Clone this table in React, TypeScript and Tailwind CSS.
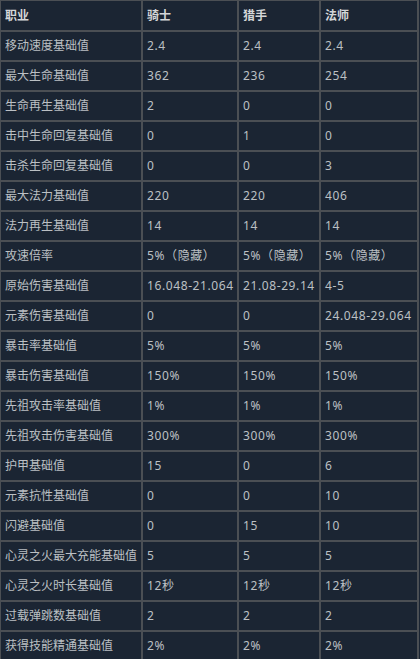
const HEAD = ["职业", "骑士", "猎手", "法师"];

const ROWS: string[][] = [
  ["移动速度基础值", "2.4", "2.4", "2.4"],
  ["最大生命基础值", "362", "236", "254"],
  ["生命再生基础值", "2", "0", "0"],
  ["击中生命回复基础值", "0", "1", "0"],
  ["击杀生命回复基础值", "0", "0", "3"],
  ["最大法力基础值", "220", "220", "406"],
  ["法力再生基础值", "14", "14", "14"],
  ["攻速倍率", "5%（隐藏）", "5%（隐藏）", "5%（隐藏）"],
  ["原始伤害基础值", "16.048-21.064", "21.08-29.14", "4-5"],
  ["元素伤害基础值", "0", "0", "24.048-29.064"],
  ["暴击率基础值", "5%", "5%", "5%"],
  ["暴击伤害基础值", "150%", "150%", "150%"],
  ["先祖攻击率基础值", "1%", "1%", "1%"],
  ["先祖攻击伤害基础值", "300%", "300%", "300%"],
  ["护甲基础值", "15", "0", "6"],
  ["元素抗性基础值", "0", "0", "10"],
  ["闪避基础值", "0", "15", "10"],
  ["心灵之火最大充能基础值", "5", "5", "5"],
  ["心灵之火时长基础值", "12秒", "12秒", "12秒"],
  ["过载弹跳数基础值", "2", "2", "2"],
  ["获得技能精通基础值", "2%", "2%", "2%"],
];

export default function App() {
  return (
    <div
      className="h-[659px] w-[420px] overflow-hidden bg-[#1b2533] text-[12px]"
      style={{ fontFamily: '"Noto Sans", "Noto Sans CJK SC", sans-serif' }}
    >
      <div className="grid w-[419px] grid-cols-[140px_94px_80px_96px] gap-[2px] bg-[#4b4f54] p-[1px] pr-[2px]">
        {HEAD.map((h) => (
          <div
            key={h}
            className="flex h-[29px] items-center bg-[#1b2533] px-[4px] font-bold text-[#d4d6d8]"
          >
            {h}
          </div>
        ))}
        {ROWS.map((row) =>
          row.map((cell, i) => (
            <div
              key={row[0] + i}
              className={
                i === 0
                  ? "flex h-[28px] items-center whitespace-nowrap bg-[#1b2533] px-[4px] text-[#bcc0c4]"
                  : "flex h-[28px] items-center whitespace-nowrap bg-[#1b2533] px-[4px] tracking-[0.6px] text-[#bcc0c4]"
              }
            >
              {cell}
            </div>
          )),
        )}
      </div>
    </div>
  );
}
